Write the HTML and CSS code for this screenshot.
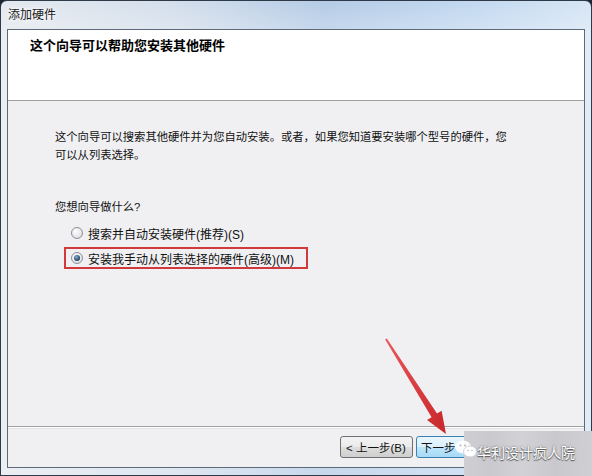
FILE: index.html
```html
<!DOCTYPE html>
<html lang="zh-CN">
<head>
    <meta charset="UTF-8">
    <title>添加硬件</title>
    <link rel="stylesheet" href="styles.css">
</head>
<body>
    <div class="window">
        <div class="titlebar">添加硬件</div>
        <div class="client">
            <div class="header">
                <h1 class="heading">这个向导可以帮助您安装其他硬件</h1>
            </div>
            <div class="content">
                <p class="intro">这个向导可以搜索其他硬件并为您自动安装。或者，如果您知道要安装哪个型号的硬件，您<br>可以从列表选择。</p>
                <p class="question">您想向导做什么?</p>
                <div class="options">
                    <label class="option"><span class="radio"></span>搜索并自动安装硬件(推荐)(S)</label>
                    <label class="option marked"><span class="radio checked"></span>安装我手动从列表选择的硬件(高级)(M)</label>
                </div>
            </div>
            <div class="footer">
                <button class="btn">&lt; 上一步(B)</button>
                <button class="btn focus">下一步</button>
            </div>
        </div>

        <!-- red arrow drawn over the dialog -->
        <svg class="arrow" width="592" height="476" viewBox="0 0 592 476">
            <defs>
                <linearGradient id="ar" x1="0" y1="0" x2="1" y2="1">
                    <stop offset="0" stop-color="#e8585a"/>
                    <stop offset="1" stop-color="#c8262a"/>
                </linearGradient>
            </defs>
            <polygon fill="url(#ar)" points="386.8,338.5 437,413.6 441.6,410.8 446,434 427,420 431.6,417.2 385.2,339.5"/>
        </svg>

        <div class="watermark">
            <svg class="wechat" width="24" height="20" viewBox="0 0 24 20">
                <ellipse cx="9" cy="8" rx="8" ry="6.5" fill="#fff" opacity="0.9"/>
                <ellipse cx="16" cy="12.5" rx="6.5" ry="5.5" fill="#fff" stroke="#c9c9cf" stroke-width="0.8"/>
                <circle cx="6.5" cy="6.5" r="1" fill="#b8b8be"/>
                <circle cx="11" cy="6.5" r="1" fill="#b8b8be"/>
                <circle cx="14" cy="11.5" r="0.8" fill="#b8b8be"/>
                <circle cx="18" cy="11.5" r="0.8" fill="#b8b8be"/>
            </svg>
            <span class="wm-text">华利设计疯人院</span>
        </div>
    </div>
</body>
</html>
```

FILE: styles.css
```css
* {
    margin: 0;
    padding: 0;
    box-sizing: border-box;
}

body {
    width: 592px;
    height: 476px;
    overflow: hidden;
    background: #1d2733;
    font-family: "Liberation Sans", "Noto Sans CJK SC", sans-serif;
    color: #111;
}

.window {
    position: relative;
    width: 592px;
    height: 476px;
    border: 1px solid #2e3a48;
    border-radius: 7px 7px 0 0;
    background: linear-gradient(to bottom, rgba(255,255,255,0) 0, rgba(255,255,255,0.25) 30px),
                linear-gradient(to right, #e4e9ef 0, #d3deeb 30%, #b4cbe6 55%, #c2d8f0 80%, #d6e5f4 100%);
    padding: 0 6px 7px 6px;
    display: flex;
    flex-direction: column;
}

.titlebar {
    height: 28px;
    line-height: 28px;
    padding-left: 1px;
    font-size: 12px;
    color: #1a1a1a;
    text-shadow: 0 0 6px #fff, 0 0 3px #fff;
}

.client {
    flex: 1;
    border: 1px solid #5d6a7a;
    background: #f0f0f3;
    display: flex;
    flex-direction: column;
}

.header {
    height: 71px;
    background: #fff;
    border-bottom: 1px solid #a0a0a0;
    padding: 6px 0 0 22px;
}

.heading {
    font-size: 13px;
    line-height: 20px;
    font-weight: bold;
    color: #000;
}

.content {
    flex: 1;
    padding: 27px 0 0 47px;
    font-size: 11.3px;
}

.intro {
    line-height: 18px;
}

.question {
    margin-top: 34px;
    line-height: 18px;
}

.options {
    margin-top: 6px;
    display: flex;
    flex-direction: column;
    gap: 3px;
    font-size: 12px;
}

.option {
    display: flex;
    align-items: center;
    gap: 5px;
    height: 22px;
    padding-left: 16px;
}

.option.marked {
    width: 244px;
    margin-left: 9px;
    padding-left: 5px;
    border: 2px solid #d2393b;
}

.radio {
    width: 12px;
    height: 12px;
    border-radius: 50%;
    border: 1px solid #8c8f94;
    background: radial-gradient(circle at 40% 35%, #fdfdfd 0, #e6e7ea 60%, #cfd2d6 100%);
    display: flex;
    align-items: center;
    justify-content: center;
}

.radio.checked::after {
    content: "";
    width: 6px;
    height: 6px;
    border-radius: 50%;
    background: radial-gradient(circle at 40% 35%, #8fb1d0 0, #2b4e70 60%, #15293d 100%);
}

.footer {
    height: 41px;
    border-top: 1px solid #a0a0a0;
    box-shadow: inset 0 1px 0 #fff, inset 0 2px 0 #e3e3e6;
    display: flex;
    align-items: center;
    padding-left: 332px;
    gap: 3px;
}

.btn {
    width: 73px;
    height: 22px;
    border: 1px solid #707070;
    border-radius: 3px;
    background: linear-gradient(to bottom, #f3f3f3 0, #ebebeb 50%, #dddddd 51%, #cfcfcf 100%);
    font-family: "Liberation Sans", "Noto Sans CJK SC", sans-serif;
    font-size: 11.5px;
    color: #111;
    text-align: left;
    padding-left: 5px;
    white-space: nowrap;
}

.btn.focus {
    border-color: #3c7fb1;
    background: linear-gradient(to bottom, #eaf6fd 0, #d9f0fc 50%, #bee6fd 51%, #a7d9f5 100%);
    padding-left: 4px;
}

.arrow {
    position: absolute;
    left: -1px;
    top: -1px;
    pointer-events: none;
}

.watermark {
    position: absolute;
    left: 463px;
    top: 430px;
    width: 130px;
    height: 47px;
    background: linear-gradient(to right, #cfcfd3 0, #c9c9ce 20%, #d2d2d6 45%, #c8c8cd 70%, #d0d0d4 100%);
    display: flex;
    align-items: center;
}

.wechat {
    position: absolute;
    left: -10px;
    top: 8px;
}

.wm-text {
    margin-left: 13px;
    margin-top: -6px;
    font-family: "Noto Sans CJK SC", sans-serif;
    font-size: 14px;
    color: #fff;
    text-shadow: 0 0 2px #555, 0 1px 1px #555;
}
```
